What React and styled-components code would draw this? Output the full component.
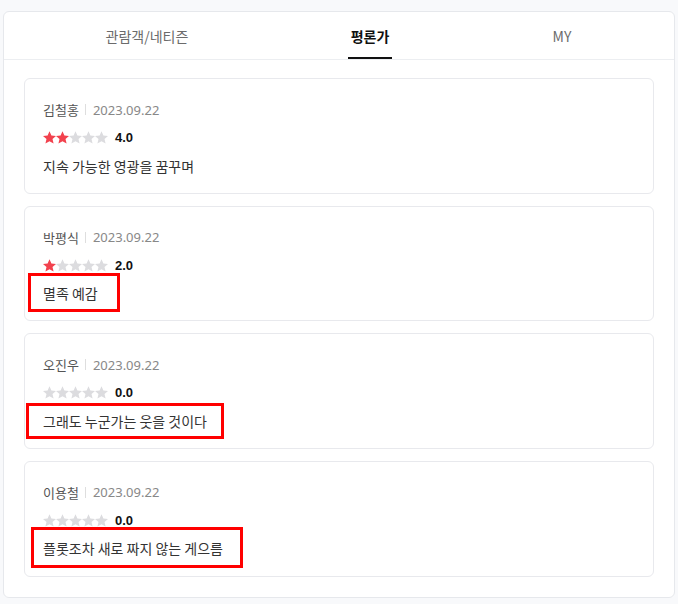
import React, { useState } from 'react'
import styled, { createGlobalStyle } from 'styled-components'

const GlobalStyle = createGlobalStyle`
  * { box-sizing: border-box; }
  body {
    margin: 0;
    background: #f8f9fb;
    font-family: "Noto Sans", "Noto Sans CJK KR", sans-serif;
  }
`

// 스타일
const Panel = styled.section`
  width: 672px;
  margin: 11px 0 0 3px;
  background: #fff;
  border: 1px solid #e6e8ec;
  border-radius: 6px;
`
const Tabs = styled.ul`
  display: grid;
  grid-template-columns: 286px 160px 1fr;
  margin: 0;
  padding: 0;
  list-style: none;
  border-bottom: 1px solid #eceef1;
`
const Tab = styled.li`
  display: flex;
  justify-content: center;
  height: 47px;
  cursor: pointer;
  span {
    display: flex;
    align-items: center;
    padding: 2px 3px 0;
    font-family: "Noto Sans CJK KR", sans-serif;
    font-size: 14px;
    font-weight: ${p => (p.$active ? 700 : 400)};
    color: ${p => (p.$active ? '#111' : '#6b6b6b')};
    border-bottom: 2px solid ${p => (p.$active ? '#111' : 'transparent')};
  }
`
const ReviewList = styled.ul`
  display: flex;
  flex-direction: column;
  gap: 12px;
  margin: 0;
  padding: 18px 20px 20px;
  list-style: none;
`
const ReviewCard = styled.li`
  position: relative;
  height: 115.67px;
  padding: 21.5px 18px 0;
  border: 1px solid #e8e9ed;
  border-radius: 6px;
  background: #fff;
`
const Writer = styled.div`
  display: flex;
  align-items: center;
  height: 18px;
  font-size: 13px;
  strong {
    font-family: "Noto Sans CJK KR", sans-serif;
    font-weight: 400;
    color: #555;
  }
  i {
    width: 1px;
    height: 11px;
    margin: 0 7px 0 6px;
    background: #dedede;
  }
  span {
    color: #888;
  }
`
const Rating = styled.div`
  display: flex;
  align-items: center;
  height: 18px;
  margin-top: 10px;
  b {
    margin-left: 7px;
    font-family: "Liberation Sans", sans-serif;
    font-size: 13px;
    color: #111;
  }
`
const Comment = styled.p`
  margin: 9px 0 0;
  font-family: "Noto Sans CJK KR", sans-serif;
  font-size: 14px;
  line-height: 20px;
  color: #333;
`
const Mark = styled.span`
  position: absolute;
  left: ${p => p.$box[0]}px;
  top: ${p => p.$box[1]}px;
  width: ${p => p.$box[2]}px;
  height: ${p => p.$box[3]}px;
  border: 3px solid #f00;
  pointer-events: none;
`

const Star = ({ on }) => (
  <svg width="13" height="13" viewBox="1 1 22 22">
    <path
      d="M12 1.5l3.2 7.2 7.8.7-5.9 5.2 1.8 7.7L12 18.3l-6.9 4 1.8-7.7L1 9.4l7.8-.7z"
      fill={on ? '#f2424e' : '#dcdcdf'}
    />
  </svg>
)

const reviews = [
  { name: '김철홍', date: '2023.09.22', stars: 2, score: '4.0', text: '지속 가능한 영광을 꿈꾸며' },
  { name: '박평식', date: '2023.09.22', stars: 1, score: '2.0', text: '멸족 예감', box: [3, 66, 92, 39] },
  { name: '오진우', date: '2023.09.22', stars: 0, score: '0.0', text: '그래도 누군가는 웃을 것이다', box: [1, 69, 198, 36] },
  { name: '이용철', date: '2023.09.22', stars: 0, score: '0.0', text: '플롯조차 새로 짜지 않는 게으름', box: [6, 65, 212, 41] },
]

const tabs = ['관람객/네티즌', '평론가', 'MY']

const App = () => {
  const [tab, setTab] = useState(1)
  return (
    <>
      <GlobalStyle />
      <Panel>
        <Tabs>
          {tabs.map((t, i) => (
            <Tab key={t} $active={tab === i} onClick={() => setTab(i)}>
              <span>{t}</span>
            </Tab>
          ))}
        </Tabs>
        <ReviewList>
          {reviews.map((r, i) => (
            <ReviewCard key={i}>
              <Writer>
                <strong>{r.name}</strong>
                <i />
                <span>{r.date}</span>
              </Writer>
              <Rating>
                {[0, 1, 2, 3, 4].map(n => <Star key={n} on={n < r.stars} />)}
                <b>{r.score}</b>
              </Rating>
              <Comment>{r.text}</Comment>
              {r.box && <Mark $box={r.box} />}
            </ReviewCard>
          ))}
        </ReviewList>
      </Panel>
    </>
  )
}

export default App
